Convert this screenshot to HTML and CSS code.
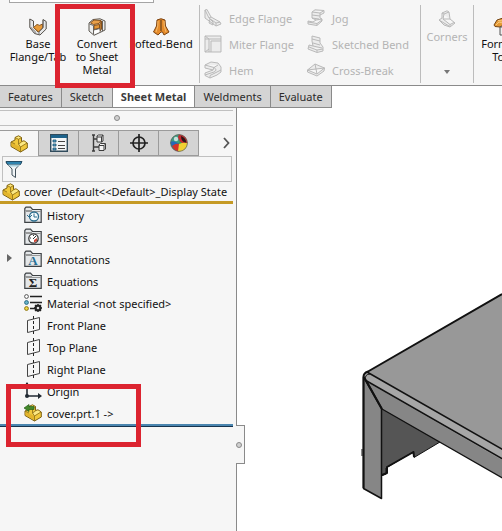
FILE: index.html
```html
<!DOCTYPE html>
<html lang="en">
<head>
  <meta charset="UTF-8" />
  <meta name="viewport" content="width=device-width, initial-scale=1" />
  <title>Sheet Metal</title>
  <link rel="stylesheet" href="styles.css">
</head>
<body>

  <!-- shared icons -->
  <svg class="defs" width="0" height="0" aria-hidden="true">
    <symbol id="part" viewBox="0 0 18 18">
      <path d="M1 7 L5 5 V2.500 L8.500 .8 L11.500 2.500 V6.500 L14 5.800 L17.300 8 V13 L10.500 17 L1 11.500Z" fill="#f0c83c" stroke="#7d6114" />
      <path d="M1.500 7.500 L10 12 V16 L1.500 11Z" fill="#e3b52c" />
      <path d="M5.500 2.800 L8.500 1.400 L11 2.700 L8.500 4Z M8.500 9 L11.500 7.300 L14 6.500 L16.500 8 L10.500 11.500Z" fill="#fbe884" />
      <path d="M5 2.500 L8.500 4.300 L11.500 2.500 M8.500 4.300 V9 L11.500 7 M8.500 9 L10.500 12 L17 8 M10.500 12 V17 M1 7 L5 9" fill="none" stroke="#8a6c18" stroke-width=".8" />
    </symbol>
    <symbol id="folder" viewBox="0 0 18 18">
      <path d="M.8 16.300 V2.500 L2 1.200 H6.500 L8.500 3.500 H17.200 V16.300Z" fill="#e4e7e9" stroke="#3e4245" stroke-width="1.200" />
      <path d="M1.500 4.500 H8 M2 5.500 H16.500" stroke="#777" stroke-width=".7" />
    </symbol>
    <symbol id="plane" viewBox="0 0 18 18">
      <path d="M3.500 4.500 L15.500 1.500 V13.500 L3.500 16.500Z" fill="none" stroke="#444" />
      <path d="M9.500 0 V18" stroke="#222" stroke-dasharray="3 2" />
    </symbol>
  </svg>

  <header class="ribbon">
    <div class="search-edge"></div>
    <button class="tool tool-base">
      <svg width="18" height="18" viewBox="0 0 18 18">
        <path d="M.8 1 L4.500 3 V8.500 L9 14 L14 9.500 V1.500 L17.200 3.500 V11 L11 17 L5.500 15.500 L.8 9.500Z" fill="#e5e6e7" stroke="#55504a" />
        <path d="M4.500 9.500 L8 6.500 Q10.500 8.500 13.500 6 V10 L9.500 14Z" fill="#e89b39" stroke="#86521a" />
        <path d="M1.500 9 L6 13.500 V15.500 M14 2 V10 L10 14 V16.500" fill="none" stroke="#74716e" />
      </svg>
      Base<br>Flange/Tab
    </button>
    <button class="tool tool-convert">
      <svg width="18" height="18" viewBox="0 0 18 18">
        <path d="M1 5 L5 1.500 L12 .8 L17 3 V12 L13 14 L6 17.300 L1 13Z" fill="#eceded" stroke="#5d5851" />
        <path d="M2.500 4.800 L6 2 L13 2.500 L11 5.500 L5.500 6.500Z M12 6 L13.500 3 V11 L12 13Z" fill="#e9a04a" stroke="#87511b" />
        <path d="M6 7.500 L11.500 6.500 V10 L6 11.500Z" fill="#e49637" stroke="#87511b" />
        <path d="M1.500 6 L5.500 7.500 V16.500 M14.500 3 V13 M6 12 L12 10.500 V14" fill="none" stroke="#67625d" />
        <path d="M6.500 12.500 L11.500 11.500 V13.800 L6.500 16Z" fill="#fff" />
      </svg>
      Convert<br>to Sheet<br>Metal
    </button>
    <button class="tool tool-lofted">
      <svg width="18" height="18" viewBox="0 0 18 18">
        <path d="M5 2 Q9 -.5 13 2 L13.500 8 L17 14 L12 17 L10.500 14 H9 L6 17 L1.500 14 L4.500 8Z" fill="#e68c2b" stroke="#7b4312" />
        <path d="M6 3 L5.800 8 L4 14 M12 3 L12.300 8 L14 14" fill="none" stroke="#f5bb6c" />
        <path d="M9 2 V13" stroke="#684018" stroke-width="1.200" />
      </svg>
      Lofted-Bend
    </button>

    <div class="flanges">
      <button disabled><svg width="18" height="18" viewBox="0 0 18 18"><path d="M1 1 L3 .5 L7 8 L16 13 L17 15 L12 17 L1 9Z M1 1 L5 9 L12 14 V17 M5 9 L7 8 M12 14 L16 13 M6 10 L9 13 V16 L5 14Z" /></svg>Edge Flange</button>
      <button disabled><svg width="18" height="18" viewBox="0 0 18 18"><path d="M5 3 L8 .8 L17 1.500 V4 L13 6 V9 L15 10 V12 L10 16.500 L1 15 V12 L6 13 L9 11 L5 9Z M5 3 L13 4 L17 1.500 M13 4 V6 M5 6 L13 7 M5 9 L12 10 M9 11 L15 10 M1 13 L10 14.500 L15 11 M10 14.500 V16" /></svg>Jog</button>
      <button disabled><svg width="18" height="18" viewBox="0 0 18 18"><path d="M1 1 H17 V17 H1Z M1 4 H17 M5 4 V17 M1 1 L5 4 M7 6 H17 M7 6 V17 M1 17 L5 14" /></svg>Miter Flange</button>
      <button disabled><svg width="18" height="18" viewBox="0 0 18 18"><path d="M5 1 L13 3 V8 L16 12 V16 L10 17.500 L1 14 L2 10 L6 11 L5 6Z M5 4 L13 6 M6 8 L13 10 M6 11 L15 13 M2 12 L10 15 L16 14 M10 15 V17" /></svg>Sketched Bend</button>
      <button disabled><svg width="18" height="18" viewBox="0 0 18 18"><path d="M1 4 L7 1 L14 2 L17 6 V11 L13 14 L6 17 L1 14.500 V12 L9 9 L1 7Z M1 4 L10 6.500 L14 4 M10 6.500 Q14 9 10 11 L1 14 M9 9 L10 6.500 M6 14.500 L17 9 M6 14.500 V17" /></svg>Hem</button>
      <button disabled><svg width="18" height="18" viewBox="0 0 18 18"><path d="M.5 9 L8 3 L17.500 7 L17 10 L10 15 L.5 11Z M.5 9 L10 13 L17.500 7 M8 3 L10 13 M.5 9 L17.500 7" /></svg>Cross-Break</button>
    </div>

    <button class="corners" disabled>
      <svg width="18" height="18" viewBox="0 0 18 18"><path d="M4 3 L9 .8 L11 2 L12 9 L17 13 L12 17 L6 15 L1 10 L4 8Z M4 3 L6 4 L5 9 L12 14.500 L16 12.500 M6 4 L11 2 M5 9 L12 9 M1 10 L11 16 M12 14.500 V17" /></svg>
      Corners
      <svg class="caret" width="6" height="4" viewBox="0 0 6 4"><path d="M0 0 H6 L3 4Z" /></svg>
    </button>
    <button class="tool tool-forming">
      <svg width="20" height="18" viewBox="0 0 20 18">
        <path d="M1 7 L4 2 L10 0 L16 1 L19 6 L17 9 L12 6 L7 9 L2 8.500Z" fill="#e59a36" stroke="#744516" />
        <path d="M3 7 L6 4 L10 5 M5 2.500 L10 3" fill="none" stroke="#f7cb7f" />
        <path d="M7 9 H16 V17 H7Z" fill="#eee" stroke="#555" />
      </svg>
      Forming<br>Tool
    </button>
  </header>

  <nav class="tabs">
    <a href="#">Features</a>
    <a href="#">Sketch</a>
    <a href="#" class="active">Sheet Metal</a>
    <a href="#">Weldments</a>
    <a href="#">Evaluate</a>
  </nav>

  <main class="workspace">
    <aside class="panel">
      <div class="grip"><span class="dot"></span></div>
      <div class="panel-tabs">
        <button class="active" aria-label="Feature tree"><svg width="18" height="18"><use href="#part" /></svg></button>
        <button aria-label="Properties">
          <svg width="18" height="18" viewBox="0 0 18 18">
            <path d="M.7 .7 H17.300 V17.300 H.7Z" fill="#f4f6f7" stroke="#314b5c" stroke-width="1.400" />
            <path d="M1 1 H17 V4 H1Z" fill="#1d638c" />
            <path d="M3 6 H6 V8 H3Z M3 10 H6 V12 H3Z M3 14 H6 V16 H3Z" fill="#5ba7cb" stroke="#174f70" stroke-width=".8" />
            <path d="M8 7.500 H15 M8 11.500 H15 M8 14.500 H15" stroke="#444" />
          </svg>
        </button>
        <button aria-label="Configurations">
          <svg width="18" height="18" viewBox="0 0 18 18" fill="#f3f3f3" stroke="#3c3c3c">
            <path d="M2 1 H5 M3.500 1 V17 M2 17 H5 M4 5 H8 M4 13 H10" stroke-width="1.400" />
            <path d="M7 2 L8.500 1 H13 V7 L11.500 8 H7Z M9 11 L10.500 9.500 H15.500 V15 L14 16.500 H9Z M7 3 H11.500 V8 M11.500 3 L13 1 M9 11.500 H14 V16 M14 11.500 L15.500 10" />
          </svg>
        </button>
        <button aria-label="Dimensions">
          <svg width="18" height="18" viewBox="0 0 18 18" fill="none" stroke="#222" stroke-width="1.700">
            <circle cx="9" cy="9" r="6" /><path d="M9 0 V18 M0 9 H18" />
          </svg>
        </button>
        <button aria-label="Appearances">
          <svg width="18" height="18" viewBox="0 0 18 18">
            <circle cx="9" cy="9" r="8.500" fill="#3c9b55" />
            <path d="M1 6 Q3 1 9 .5 L11 2 L9 9 Q4 8 .6 10Z" fill="#3f9b84" />
            <path d="M.5 8 Q4 6 9 10 L8 17.300 Q1 15 .5 8Z" fill="#2768b8" />
            <path d="M2 12 Q6 9 9 10 L9 17.500 Q4 17 2 12Z" fill="#d43328" />
            <path d="M9 .5 Q17 1 17.500 9 L14 10 Q9 8 8 3Z" fill="#c8272f" />
            <path d="M11 2 Q16 4 16.500 9 Q11 8 11 2Z" fill="#2a1717" />
            <path d="M9 10 Q13 8 17.500 9 Q17 16 10 17.500 L8 17Z" fill="#f0cf32" />
            <circle cx="6" cy="5" r="2.200" fill="#fff" opacity=".7" />
            <circle cx="9" cy="9" r="8.400" fill="none" stroke="#66605a" stroke-width=".7" />
          </svg>
        </button>
        <button class="more" aria-label="More tabs">
          <svg width="7" height="12" viewBox="0 0 7 12" fill="none" stroke="#555" stroke-width="1.800"><path d="M1 1 L5.500 6 L1 11" /></svg>
        </button>
      </div>

      <label class="filter">
        <svg width="18" height="18" viewBox="0 0 18 18">
          <path d="M1 2.500 L7 9 V15 L10.500 17.500 V9 L16.500 2.500Z" fill="#f1f5f7" stroke="#41505a" />
          <path d="M1 1.500 H17 L15.500 4.500 H2.500Z" fill="#2f83ae" stroke="#244d66" />
          <path d="M3 4.500 H15 L13 6.500 H5Z" fill="#a9cfdd" />
        </svg>
        <input type="text" aria-label="Filter">
      </label>

      <div class="root"><svg width="18" height="18"><use href="#part" /></svg><span>cover &nbsp;(Default&lt;&lt;Default&gt;_Display State</span></div>

      <ul class="tree">
        <li><svg width="18" height="18" viewBox="0 0 18 18"><use href="#folder" /><circle cx="10" cy="10.500" r="4.500" fill="#f5fafc" stroke="#2d6e8e" stroke-width="1.300" /><path d="M10 7.500 V11 H13 M3 9 L5.500 11.500 L8 9" fill="none" stroke="#2d6e8e" /></svg>History</li>
        <li><svg width="18" height="18" viewBox="0 0 18 18"><use href="#folder" /><circle cx="9.500" cy="10.500" r="4.700" fill="#fff" stroke="#333" stroke-width="1.200" /><path d="M9 11 L12 8 M6 10 H7 M9.500 7 V8" stroke="#333" /><path d="M10 12 L13 10 V13 L10 14.500Z" fill="#ce493a" /></svg>Sensors</li>
        <li><svg class="arrow" width="5" height="8" viewBox="0 0 5 8"><path d="M0 0 L5 4 L0 8Z" /></svg><svg width="18" height="18" viewBox="0 0 18 18"><use href="#folder" /><text x="9" y="15" class="glyph glyph-a">A</text></svg>Annotations</li>
        <li><svg width="18" height="18" viewBox="0 0 18 18"><use href="#folder" /><text x="9" y="15" class="glyph">Σ</text></svg>Equations</li>
        <li><svg width="18" height="18" viewBox="0 0 18 18">
          <path d="M6 2.500 H18 M6 8.500 H18 M6 14.500 H12" stroke="#222" stroke-width="1.400" />
          <circle cx="2.500" cy="2.500" r="1.900" fill="#fff" stroke="#555" /><circle cx="2.500" cy="8.500" r="1.900" fill="#69b5cc" stroke="#286b83" /><circle cx="2.500" cy="14.500" r="1.900" fill="#efd744" stroke="#8e7717" />
          <circle cx="14" cy="14" r="2.400" fill="#ddd" stroke="#222" stroke-width="2.200" /><path d="M14 10 V12 M14 16 V18 M10 14 H12 M16 14 H18 M11 11 L12 12 M16 16 L17 17 M17 11 L16 12 M12 16 L11 17" stroke="#222" stroke-width="1.300" />
        </svg>Material &lt;not specified&gt;</li>
        <li><svg width="18" height="18"><use href="#plane" /></svg>Front Plane</li>
        <li><svg width="18" height="18"><use href="#plane" /></svg>Top Plane</li>
        <li><svg width="18" height="18"><use href="#plane" /></svg>Right Plane</li>
        <li><svg width="18" height="18" viewBox="0 0 18 18"><path d="M3 1 V14 H15" fill="none" stroke="#222a33" stroke-width="1.600" /><path d="M14 11 L18 14 L14 17Z M1 3 L3 0 L5 3Z" fill="#222a33" /><circle cx="3" cy="14" r="2" fill="#222a33" /></svg>Origin</li>
        <li><svg width="18" height="18" viewBox="0 0 18 18"><use href="#part" /><path d="M0 4 L5 .5 V2.500 H10 V5.500 H5 V7.500Z" fill="#43882b" stroke="#28621a" stroke-width=".7" /></svg>cover.prt.1 -&gt;</li>
      </ul>
      <div class="rollback"></div>
      <div class="callout callout-import"></div>
      <div class="splitter"><span class="dot"></span></div>
    </aside>

    <section class="viewport">
      <svg class="model" viewBox="237 108 265 423" preserveAspectRatio="xMinYMin slice" role="img" aria-label="cover part" stroke-linejoin="round">
        <path d="M381 408 L440 442 L414 457.500 L413 452 L386 468 V474 L381 476Z" fill="#555" stroke="#111" />
        <path d="M414 457 L413.500 452 L387 467 V473 L382 475" fill="none" stroke="#111" stroke-width="2" />
        <path d="M367 372 L502 293.500 V449 L368 373Z" fill="#989898" />
        <path d="M365 378 L504 459 V479 L382 409Z" fill="#868686" stroke="#111" stroke-width="1.300" />
        <path d="M367 372 L502 449 V460 L365 381 L364 376Z" fill="#a6a6a6" />
        <path d="M367 372 L520 459.500 M365 380 L520 469" fill="none" stroke="#111" stroke-width="1.500" />
        <path d="M363.500 377 L381.500 409 V498.500 L363.500 488.500Z" fill="#868686" stroke="#111" stroke-width="1.500" />
        <path d="M364 377 L382 409" stroke="#111" stroke-width="2" />
        <path d="M363.500 488 V377 Q363.500 373 368 371.500 L502 294" fill="none" stroke="#111" stroke-width="2" />
        <path d="M365 380 Q365 374 370 374" fill="none" stroke="#111" />
        <path d="M362 449 V456" stroke="#111" />
      </svg>
    </section>
  </main>
</body>
</html>
```
FILE: styles.css
```css
* {
  box-sizing: border-box;
}

body {
  margin: 0;
  min-height: 100vh;
  display: flex;
  flex-direction: column;
  font-family: "Noto Sans", "Open Sans", sans-serif;
  font-size: 11px;
  color: #111;
  background: #fff;
}

svg {
  display: block;
  flex-shrink: 0;
}

.defs {
  position: absolute;
}

button {
  padding: 0;
  border: none;
  background: none;
  font: inherit;
  color: inherit;
  flex-shrink: 0;
}

/* ribbon */
.ribbon {
  position: relative;
  z-index: 1;
  display: flex;
  height: 86px;
  background: #f6f6f6;
  border-bottom: 1px solid #8a8a8a;
  overflow-x: clip;
}

.search-edge {
  position: absolute;
  left: 9px;
  top: 0;
  width: 145px;
  height: 3px;
  background: #fff;
  border: 1px solid #a5a5a5;
  border-top: none;
}

.tool {
  display: flex;
  flex-direction: column;
  align-items: center;
  padding-top: 18px;
  line-height: 13px;
  white-space: nowrap;
}

.tool svg {
  margin-bottom: 1px;
}

.tool-base {
  width: 76px;
  margin-right: -21px;
}

.tool-convert {
  position: relative;
  z-index: 1;
  width: 80px;
  height: 84px;
  margin-top: 4px;
  padding: 9px 0 0 4px;
  border: 5px solid #dc2430;
}

.tool-lofted {
  width: 68px;
  margin-left: -8px;
}

.flanges {
  display: grid;
  grid-template-columns: 103px 113px;
  grid-template-rows: repeat(3, 26px);
  flex-shrink: 0;
  height: 78px;
  margin: 5px 0 0 4px;
  padding-left: 4px;
  border-left: 1px solid #bcbcbc;
}

.flanges button {
  display: flex;
  align-items: center;
  gap: 7px;
  white-space: nowrap;
}

button:disabled {
  color: #b4b4b4;
}

button:disabled svg {
  fill: #ececec;
  stroke: #b9b9b9;
}

.corners {
  display: flex;
  flex-direction: column;
  align-items: center;
  width: 54px;
  height: 78px;
  margin-top: 5px;
  padding-top: 5px;
  line-height: 18px;
  border-left: 1px solid #bcbcbc;
  border-right: 1px solid #bcbcbc;
}

.corners .caret {
  margin-top: 24px;
}

.corners:disabled .caret {
  fill: #777;
  stroke: none;
}

.tool-forming {
  width: 58px;
}

/* command tabs */
.tabs {
  display: flex;
  height: 22px;
}

.tabs a {
  padding: 0 8px;
  line-height: 21px;
  color: #2b2b2b;
  text-decoration: none;
  background: #d4d4d4;
  border-right: 1px solid #8a8a8a;
  border-bottom: 1px solid #8a8a8a;
}

.tabs a.active {
  font-weight: bold;
  background: #fff;
  color: #3c3c3c;
}

/* feature manager */
.workspace {
  flex: 1;
  display: grid;
  grid-template-columns: 237px 1fr;
}

.panel {
  position: relative;
  background: #f6f6f6;
  border-right: 1px solid #8a8a8a;
}

.grip {
  display: flex;
  align-items: center;
  justify-content: center;
  height: 16px;
  margin: 2px 3px 4px 0;
  border-top: 1px solid #c0c0c0;
  border-bottom: 1px solid #c0c0c0;
}

.dot {
  width: 6px;
  height: 6px;
  border: 1px solid #8a8a8a;
  border-radius: 50%;
  background: #d0d0d0;
}

.panel-tabs {
  display: flex;
  height: 26px;
  margin-right: 3px;
}

.panel-tabs button {
  display: flex;
  align-items: center;
  justify-content: center;
  width: 40px;
  background: #d4d4d4;
  border: 1px solid #9b9b9b;
  border-left: none;
}

.panel-tabs .active {
  width: 39px;
  background: #f6f6f6;
  border-bottom: none;
}

.panel-tabs .more {
  width: 14px;
  margin-left: auto;
  background: none;
  border: none;
}

.filter {
  display: flex;
  align-items: center;
  height: 26px;
  margin: 0 4px 0 2px;
  padding-left: 2px;
  border: 1px solid #c0c0c0;
}

.filter input {
  flex: 1;
  min-width: 0;
  border: none;
  background: none;
  font: inherit;
  outline: none;
}

.root {
  display: flex;
  align-items: center;
  gap: 4px;
  height: 22px;
  margin-right: 3px;
  padding-left: 2px;
  overflow: hidden;
  white-space: nowrap;
  border-bottom: 3px solid #c59a25;
}

.tree {
  list-style: none;
  margin: 0;
  padding: 0;
}

.tree li {
  position: relative;
  display: flex;
  align-items: center;
  gap: 5px;
  height: 22px;
  padding-left: 24px;
}

.tree .arrow {
  position: absolute;
  left: 7px;
  top: 6px;
  fill: #666;
}

.glyph {
  font: bold 13px "Liberation Serif", serif;
  text-anchor: middle;
  fill: #222;
}

.glyph-a {
  fill: #286f95;
}

.rollback {
  height: 3px;
  margin-right: 3px;
  background: #4b86b0;
  border-bottom: 1px solid #17344f;
}

.callout {
  position: absolute;
  border: 5px solid #dc2430;
}

.callout-import {
  left: 6px;
  top: 276px;
  width: 135px;
  height: 63px;
}

.splitter {
  position: absolute;
  right: -9px;
  top: 317px;
  display: flex;
  align-items: center;
  width: 9px;
  height: 39px;
  background: #f6f6f6;
  border: 1px solid #8a8a8a;
  border-left: none;
}

.viewport {
  overflow: hidden;
  min-height: 423px;
}

.model {
  width: 100%;
  height: 100%;
}
```
